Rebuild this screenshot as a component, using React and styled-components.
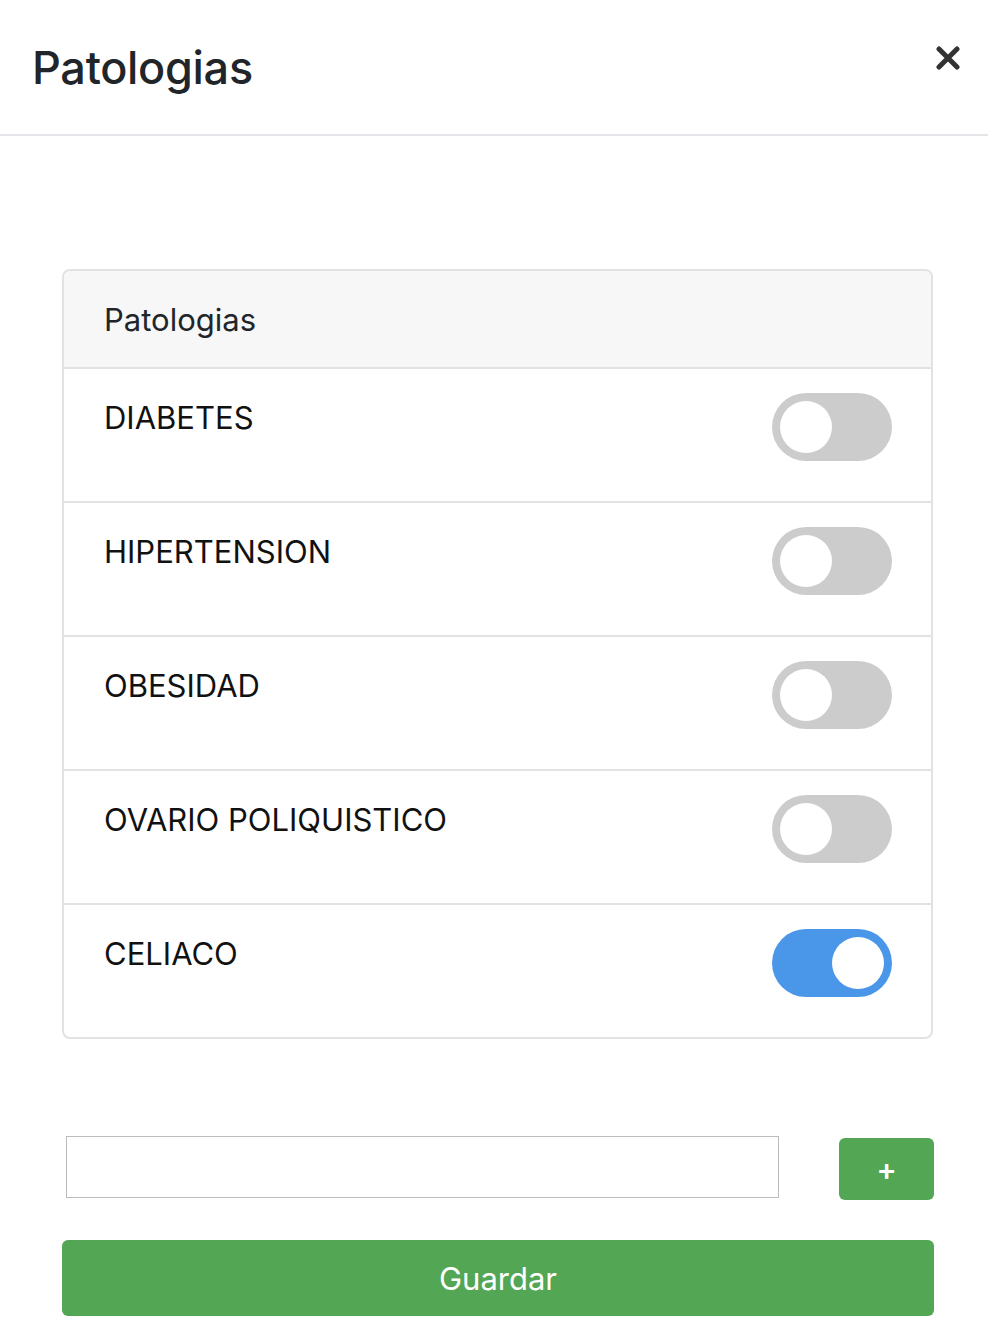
import React, { useState } from 'react';
import styled, { createGlobalStyle } from 'styled-components';

const Global = createGlobalStyle`
    body {
        margin: 0;
        background: #fff;
        font-family: Inter, "Liberation Sans", sans-serif;
        color: #212529;
    }
`;

const Page = styled.div`
    width: 988px;
    min-height: 1336px;
`;

const Header = styled.header`
    height: 136px;
    box-sizing: border-box;
    border-bottom: 2px solid #e3e5e8;
    display: flex;
    align-items: flex-start;
    justify-content: space-between;
    padding: 40px 28px 0 32px;
`;

const Title = styled.h1`
    margin: 0;
    font-size: 45px;
    line-height: 56px;
    font-weight: 500;
    color: #212529;
    letter-spacing: -0.3px;
`;

const Close = styled.button`
    border: 0;
    background: none;
    padding: 0;
    margin-top: 6px;
    width: 24px;
    height: 24px;
    cursor: pointer;
`;

const Body = styled.main`
    padding: 133px 54px 20px 62px;
`;

const Card = styled.section`
    border: 2px solid #e2e2e2;
    border-radius: 8px;
    overflow: hidden;
    margin-right: 1px;
`;

const CardHeader = styled.div`
    background: #f7f7f7;
    height: 96px;
    border-bottom: 2px solid #e2e2e2;
    display: flex;
    align-items: center;
    padding-left: 40px;
    font-size: 31px;
    color: #212529;
`;

const Row = styled.div`
    height: 132px;
    display: flex;
    justify-content: space-between;
    align-items: flex-start;
    padding: 0 39px 0 40px;
    border-top: ${p => (p.$first ? '0' : '2px solid #e2e2e2')};
`;

const Label = styled.span`
    font-size: 31px;
    color: #111;
    margin-top: 30px;
`;

const Track = styled.button`
    width: 120px;
    height: 68px;
    border: 0;
    border-radius: 34px;
    background: ${p => (p.$on ? '#4a96e9' : '#cccccc')};
    margin-top: 24px;
    padding: 0 8px;
    display: flex;
    align-items: center;
    justify-content: ${p => (p.$on ? 'flex-end' : 'flex-start')};
    cursor: pointer;
`;

const Knob = styled.span`
    width: 52px;
    height: 52px;
    border-radius: 50%;
    background: #fff;
`;

const AddRow = styled.div`
    display: flex;
    align-items: flex-start;
    justify-content: space-between;
    margin-top: 97px;
    padding-left: 4px;
`;

const Input = styled.input`
    width: 713px;
    height: 62px;
    box-sizing: border-box;
    border: 1.5px solid #bcbcbc;
    font-size: 28px;
    font-family: inherit;
    padding: 0 12px;
    outline: none;
`;

const AddButton = styled.button`
    width: 95px;
    height: 62px;
    margin-top: 2px;
    border: 0;
    border-radius: 6px;
    background: #53a653;
    color: #fff;
    font-size: 30px;
    font-weight: 600;
    font-family: inherit;
    cursor: pointer;
`;

const SaveButton = styled.button`
    display: block;
    width: 872px;
    height: 76px;
    margin-top: 40px;
    border: 0;
    border-radius: 6px;
    background: #53a653;
    color: #fff;
    font-size: 31px;
    font-family: inherit;
    cursor: pointer;
`;

const items = [
    { name: 'DIABETES', on: false },
    { name: 'HIPERTENSION', on: false },
    { name: 'OBESIDAD', on: false },
    { name: 'OVARIO POLIQUISTICO', on: false },
    { name: 'CELIACO', on: true },
];

export default function App() {
    const [list, setList] = useState(items);
    const toggle = i => setList(l => l.map((it, j) => (j === i ? { ...it, on: !it.on } : it)));

    return (
        <Page>
            <Global />
            <Header>
                <Title>Patologias</Title>
                <Close aria-label="Cerrar">
                    <svg width="24" height="24" viewBox="0 0 24 24">
                        <path d="M3 3 L21 21 M21 3 L3 21" stroke="#333" strokeWidth="5" strokeLinecap="round" />
                    </svg>
                </Close>
            </Header>
            <Body>
                <Card>
                    <CardHeader>Patologias</CardHeader>
                    {list.map((it, i) => (
                        <Row key={it.name} $first={i === 0}>
                            <Label>{it.name}</Label>
                            <Track $on={it.on} onClick={() => toggle(i)}>
                                <Knob />
                            </Track>
                        </Row>
                    ))}
                </Card>
                <AddRow>
                    <Input />
                    <AddButton>+</AddButton>
                </AddRow>
                <SaveButton>Guardar</SaveButton>
            </Body>
        </Page>
    );
}
